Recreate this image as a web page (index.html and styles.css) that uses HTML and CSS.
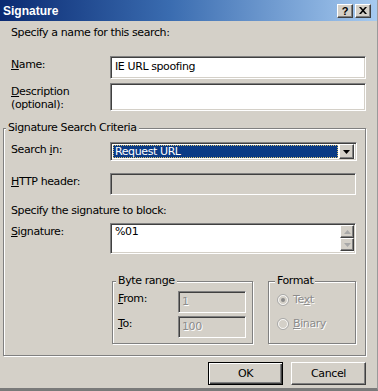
FILE: index.html
```html
<!DOCTYPE html>
<html>
<head>
<meta charset="utf-8">
<link rel="stylesheet" href="styles.css">
</head>
<body>
<div class="window">
  <div class="titlebar">
    <span class="title">Signature</span>
    <div class="tbtns">
      <span class="tbtn help">?</span>
      <span class="tbtn close"><svg width="8" height="7" viewBox="0 0 8 7"><path d="M0 0h2l2 2.3L6 0h2L5 3.5 8 7H6L4 4.7 2 7H0l3-3.5z" fill="#000"/></svg></span>
    </div>
  </div>
  <div class="body">
    <p class="intro">Specify a name for this search:</p>
    <div class="row name-row">
      <label class="lbl"><u>N</u>ame:</label>
      <div class="input name-input"><span class="val">IE URL spoofing</span></div>
    </div>
    <div class="row desc-row">
      <label class="lbl two"><span class="ln"><u>D</u>escription</span><span class="ln">(optional):</span></label>
      <div class="input desc-input"></div>
    </div>
    <fieldset class="group criteria">
      <legend>Signature Search Criteria</legend>
      <div class="row search-row">
        <label class="lbl">Search <u>i</u>n:</label>
        <div class="input combo">
          <div class="combo-val"><span>Request URL</span></div>
          <div class="raised combo-btn"><svg width="7" height="4" viewBox="0 0 7 4"><path d="M0 0h7L3.5 4z" fill="#000"/></svg></div>
        </div>
      </div>
      <div class="row http-row">
        <label class="lbl"><u>H</u>TTP header:</label>
        <div class="input disabled http-input"></div>
      </div>
      <p class="sig-intro">Specify the signature to block:</p>
      <div class="row sig-row">
        <label class="lbl"><u>S</u>ignature:</label>
        <div class="input textarea">
          <span class="val">%01</span>
          <div class="vscroll">
            <span class="raised sbtn"><svg width="7" height="4" viewBox="0 0 7 4"><path d="M3.5 0L7 4H0z" fill="#a8a8a8"/></svg></span>
            <span class="raised sbtn"><svg width="7" height="4" viewBox="0 0 7 4"><path d="M0 0h7L3.5 4z" fill="#a8a8a8"/></svg></span>
          </div>
        </div>
      </div>
      <div class="subgroups">
        <fieldset class="group byte">
          <legend>Byte range</legend>
          <div class="brow">
            <label class="lbl"><u>F</u>rom:</label>
            <div class="input disabled small"><span class="dis">1</span></div>
          </div>
          <div class="brow">
            <label class="lbl"><u>T</u>o:</label>
            <div class="input disabled small"><span class="dis">100</span></div>
          </div>
        </fieldset>
        <fieldset class="group format">
          <legend>Format</legend>
          <div class="radio">
            <svg width="12" height="12" viewBox="0 0 12 12"><circle cx="6" cy="6" r="5.5" fill="#d4d0c8" stroke="#a9a9a9"/><circle cx="6" cy="6" r="4.5" fill="none" stroke="#ffffff" stroke-width="0.8"/><circle cx="6" cy="6" r="2" fill="#8a8a8a"/></svg>
            <span class="dis">Te<u>x</u>t</span>
          </div>
          <div class="radio">
            <svg width="12" height="12" viewBox="0 0 12 12"><circle cx="6" cy="6" r="5.5" fill="#d4d0c8" stroke="#a9a9a9"/><circle cx="6" cy="6" r="4.5" fill="none" stroke="#ffffff" stroke-width="0.8"/></svg>
            <span class="dis"><u>B</u>inary</span>
          </div>
        </fieldset>
      </div>
    </fieldset>
    <div class="buttons">
      <button class="btn default">OK</button>
      <button class="btn">Cancel</button>
    </div>
  </div>
</div>
</body>
</html>
```
FILE: styles.css
```css
html, body {
  margin: 0;
  padding: 0;
  background: #d4d0c8;
}
body {
  font: 11px/14px "DejaVu Sans", Verdana, sans-serif;
  letter-spacing: -0.4px;
  color: #000;
}
p { margin: 0; }
u { text-decoration: underline; text-underline-offset: 1px; }

.window {
  width: 378px;
  height: 391px;
  box-sizing: border-box;
  background: #d4d0c8;
  display: flex;
  flex-direction: column;
  border-bottom: 3px solid #7a7a7a;
  border-right: 1px solid #9a9a9a;
}

.titlebar {
  height: 21px;
  flex: none;
  display: flex;
  align-items: center;
  justify-content: space-between;
  padding: 0 6px 0 3px;
  background: linear-gradient(90deg, #0a2a72 0%, #3a6cb0 45%, #a6caf0 100%);
}
.title {
  color: #fff;
  font: bold 12px/14px "Liberation Sans", Arial, sans-serif;
  letter-spacing: 0;
}
.tbtns { display: flex; gap: 2px; }
.tbtn {
  width: 16px;
  height: 14px;
  box-sizing: border-box;
  background: #d4d0c8;
  border: 1px solid;
  border-color: #fff #404040 #404040 #fff;
  box-shadow: inset -1px -1px #808080;
  display: flex;
  align-items: center;
  justify-content: center;
  font: bold 11px/12px "Liberation Sans", Arial, sans-serif;
  letter-spacing: 0;
}

.body {
  flex: 1;
  display: flex;
  flex-direction: column;
  padding: 0 11px 0 3px;
}

.intro { margin: 5px 0 0 8px; }

.row {
  display: grid;
  grid-template-columns: 99px 1fr;
  align-items: start;
}
.lbl { padding-top: 2px; }
.lbl.two { padding-top: 2px; }
.lbl.two .ln { display: block; line-height: 13px; }

.input {
  box-sizing: border-box;
  background: #fff;
  border: 1px solid;
  border-color: #808080 #fff #fff #808080;
  box-shadow: inset 1px 1px #404040, inset -1px -1px #d4d0c8;
}
.input.disabled { background: #d4d0c8; }
.val { display: block; padding: 3px 0 0 4px; }
.dis { color: #8c8c8c; text-shadow: 1px 1px #fff; }

.name-row { margin-top: 16px; padding-left: 8px; }
.name-input { height: 23px; }
.desc-row { margin-top: 4px; padding-left: 8px; }
.desc-input { height: 28px; }

.group {
  margin: 0;
  min-width: 0;
  border: 1px solid #808080;
  box-shadow: inset 1px 1px #fff, 1px 1px #fff;
}
.group legend {
  padding: 0 2px;
  background: #d4d0c8;
  line-height: 14px;
}

.criteria {
  margin-top: 10px;
  padding: 7px 9px 11px 7px;
}
.criteria > legend { margin-left: -5px; }

.search-row .lbl { padding-top: 1px; }
.combo {
  height: 19px;
  margin-right: -1px;
  display: flex;
  align-items: center;
  padding: 2px;
}
.combo-val {
  flex: 1;
  height: 13px;
  background: #0a3a85;
  outline: 1px dotted #d8c070;
  outline-offset: -1px;
  color: #fff;
  line-height: 13px;
  padding-left: 2px;
  margin-right: 1px;
}
.raised {
  box-sizing: border-box;
  background: #d4d0c8;
  border: 1px solid;
  border-color: #fff #404040 #404040 #fff;
  box-shadow: inset -1px -1px #808080;
  display: flex;
  align-items: center;
  justify-content: center;
}
.combo-btn { width: 15px; height: 15px; }

.http-row { margin-top: 12px; }
.http-input { height: 22px; }

.sig-intro { margin-top: 9px; }
.sig-row { margin-top: 5px; }
.textarea {
  height: 31px;
  display: flex;
  justify-content: space-between;
}
.textarea .val { padding: 1px 0 0 4px; }
.vscroll {
  display: flex;
  flex-direction: column;
  padding: 1px 1px 0 0;
}
.sbtn { width: 14px; height: 13px; }

.subgroups {
  display: flex;
  margin: 20px 0 0 101px;
}
.byte {
  width: 141px;
  box-sizing: border-box;
  padding: 3px 6px 5px 5px;
}
.byte > legend, .format > legend { margin-left: -2px; }
.brow {
  display: grid;
  grid-template-columns: 60px 68px;
  align-items: start;
}
.brow + .brow { margin-top: 3px; }
.brow .lbl { padding-top: 1px; }
.small { height: 22px; }
.small .dis { display: block; padding: 3px 0 0 3px; }

.format {
  width: 88px;
  box-sizing: border-box;
  margin-left: 15px;
  padding: 4px 4px 5px 8px;
}
.radio {
  display: flex;
  align-items: center;
  gap: 4px;
  height: 16px;
}
.radio + .radio { margin-top: 8px; }

.buttons {
  display: flex;
  justify-content: flex-end;
  gap: 8px;
  margin-top: 6px;
}
.btn {
  width: 75px;
  height: 23px;
  box-sizing: border-box;
  background: #d4d0c8;
  border: 1px solid;
  border-color: #fff #404040 #404040 #fff;
  box-shadow: inset -1px -1px #808080;
  font: inherit;
  letter-spacing: inherit;
  color: #000;
  padding: 0;
}
.btn.default {
  border: 1px solid #000;
  box-shadow: inset 1px 1px #fff, inset -1px -1px #404040, inset -2px -2px #808080;
}
```
